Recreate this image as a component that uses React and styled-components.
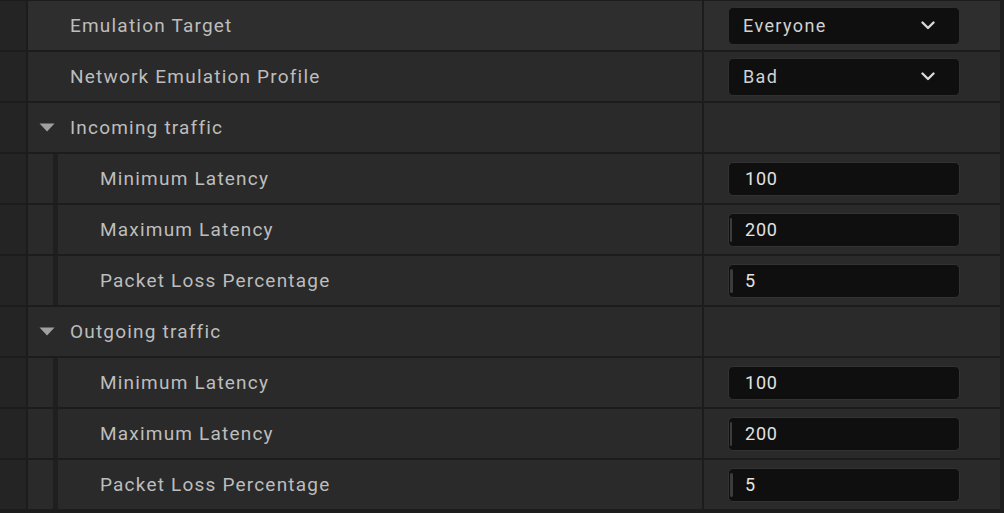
import React from "react";
import styled, { createGlobalStyle } from "styled-components";

const GlobalStyle = createGlobalStyle`
  body {
    margin: 0;
    background: #1c1c1c;
    font-family: Roboto, "Liberation Sans", sans-serif;
  }
`;

const Panel = styled.div`
  width: 1004px;
  height: 513px;
  overflow: hidden;
  box-sizing: border-box;
  border-top: 1px solid #1c1c1c;
  border-right: 4px solid #1d1d1d;
  background: #1c1c1c;
`;

const Row = styled.div`
  display: grid;
  grid-template-columns: 26px 1fr 296px;
  column-gap: 2px;
  height: 49px;
  padding-bottom: 2px;
  background: #1c1c1c;
`;

const Gutter = styled.div`
  background: #242424;
`;

const NameCell = styled.div`
  display: flex;
  align-items: stretch;
  background: ${p => (p.$hover ? "#2e2e2e" : "#2a2a2a")};
`;

const Indent = styled.div`
  width: 25px;
  flex: none;
  border-right: 5px solid #1f1f1f;
`;

const Label = styled.div`
  display: flex;
  align-items: center;
  padding-left: ${p => (p.$category ? "11px" : "42px")};
  padding-bottom: 1px;
  color: #bdbdbd;
  font-size: 19px;
  letter-spacing: 1.2px;
  white-space: nowrap;
`;

const Arrow = styled.svg`
  width: 16px;
  height: 9px;
  margin-right: 15px;
`;

const ValueCell = styled.div`
  display: flex;
  align-items: center;
  padding-left: 24px;
  background: ${p => (p.$hover ? "#2e2e2e" : "#2a2a2a")};
`;

const Combo = styled.div`
  display: flex;
  align-items: center;
  justify-content: space-between;
  box-sizing: border-box;
  width: 232px;
  height: 38px;
  padding: 0 24px 0 14px;
  border-radius: 5px;
  background: #0f0f0f;
  border: 1px solid #303030;
  color: #d2d2d2;
  font-size: 18px;
  letter-spacing: 1.4px;
`;

const NumberBox = styled.div`
  position: relative;
  display: flex;
  align-items: center;
  box-sizing: border-box;
  width: 232px;
  height: 34px;
  padding-left: 16px;
  border-radius: 5px;
  background: #0f0f0f;
  border: 1px solid #333;
  color: #e2e2e2;
  font-size: 18px;
  letter-spacing: 0.8px;
`;

const Fill = styled.span`
  position: absolute;
  left: 1px;
  top: 4px;
  bottom: 4px;
  width: ${p => p.$w}px;
  border-radius: 2px;
  background: #3c3c3c;
`;

const Chevron = () => (
  <svg width="14" height="9" viewBox="0 0 14 9">
    <polyline
      points="1.5,1.5 7,7 12.5,1.5"
      fill="none"
      stroke="#d8d8d8"
      strokeWidth="2.4"
      strokeLinecap="round"
      strokeLinejoin="round"
    />
  </svg>
);

const PropRow = ({ label, nested, hover, children }) => (
  <Row>
    <Gutter />
    <NameCell $hover={hover}>
      {nested && <Indent />}
      <Label>{label}</Label>
    </NameCell>
    <ValueCell $hover={hover}>{children}</ValueCell>
  </Row>
);

const CategoryRow = ({ label }) => (
  <Row>
    <Gutter />
    <NameCell>
      <Label $category>
        <Arrow viewBox="0 0 16 9">
          <polygon points="0.5,0.5 15.5,0.5 8,8.5" fill="#a0a0a0" />
        </Arrow>
        {label}
      </Label>
    </NameCell>
    <ValueCell />
  </Row>
);

const Number = ({ value, fill }) => (
  <NumberBox>
    {fill ? <Fill $w={fill} /> : null}
    {value}
  </NumberBox>
);

const traffic = [
  { label: "Minimum Latency", value: "100", fill: 0 },
  { label: "Maximum Latency", value: "200", fill: 2 },
  { label: "Packet Loss Percentage", value: "5", fill: 3 }
];

export default function App() {
  return (
    <Panel>
      <GlobalStyle />
      <PropRow label="Emulation Target" hover>
        <Combo>
          Everyone
          <Chevron />
        </Combo>
      </PropRow>
      <PropRow label="Network Emulation Profile">
        <Combo>
          Bad
          <Chevron />
        </Combo>
      </PropRow>
      <CategoryRow label="Incoming traffic" />
      {traffic.map(t => (
        <PropRow key={"in" + t.label} label={t.label} nested>
          <Number value={t.value} fill={t.fill} />
        </PropRow>
      ))}
      <CategoryRow label="Outgoing traffic" />
      {traffic.map(t => (
        <PropRow key={"out" + t.label} label={t.label} nested>
          <Number value={t.value} fill={t.fill} />
        </PropRow>
      ))}
    </Panel>
  );
}
